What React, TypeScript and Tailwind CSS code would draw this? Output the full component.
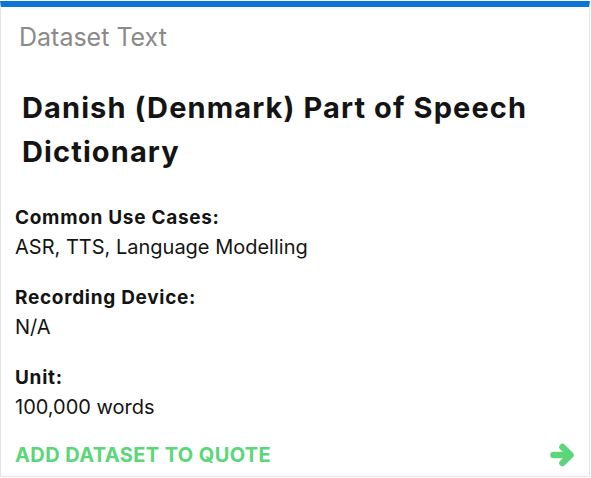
import React from "react";

function Field({ label, value }: { label: string; value: string }) {
  return (
    <div className="flex flex-col">
      <div className="text-[19px] leading-[29px] font-bold tracking-[0.7px] text-[#141414]">{label}</div>
      <div className="text-[20px] leading-[30px] text-[#141414]">{value}</div>
    </div>
  );
}

export default function App() {
  return (
    <div className="w-[591px] h-[478px] bg-white pt-px" style={{ fontFamily: "Inter, 'Noto Sans', sans-serif" }}>
      <div className="w-[590px] h-[476px] border border-[#e4e4e4] border-t-[6px] border-t-[#0b76d6] flex flex-col">
        <div className="px-[18px] pt-[14px] text-[25px] leading-[32px] text-[#8a8a8a]">Dataset Text</div>
        <div className="px-[21px] pt-[33px] text-[29px] leading-[44px] font-bold tracking-[1.1px] text-[#141414]">
          Danish (Denmark) Part of Speech Dictionary
        </div>
        <div className="px-[14px] pt-[29px] flex flex-col gap-[21px]">
          <Field label="Common Use Cases:" value="ASR, TTS, Language Modelling" />
          <Field label="Recording Device:" value="N/A" />
          <Field label="Unit:" value="100,000 words" />
        </div>
        <div className="mt-auto px-[14px] pb-[7px] flex items-center justify-between">
          <span className="text-[20px] leading-[28px] font-bold tracking-[0.4px] text-[#5bd67a] uppercase">
            Add dataset to quote
          </span>
          <svg width="24" height="24" viewBox="0 0 24 24" className="mr-[1px]">
            <g fill="none" stroke="#5bd67a" strokeWidth="6.5" strokeLinecap="round" strokeLinejoin="round">
              <path d="M3.5 12H18.5" />
              <path d="M12.5 4L20.5 12L12.5 20" />
            </g>
          </svg>
        </div>
      </div>
    </div>
  );
}
